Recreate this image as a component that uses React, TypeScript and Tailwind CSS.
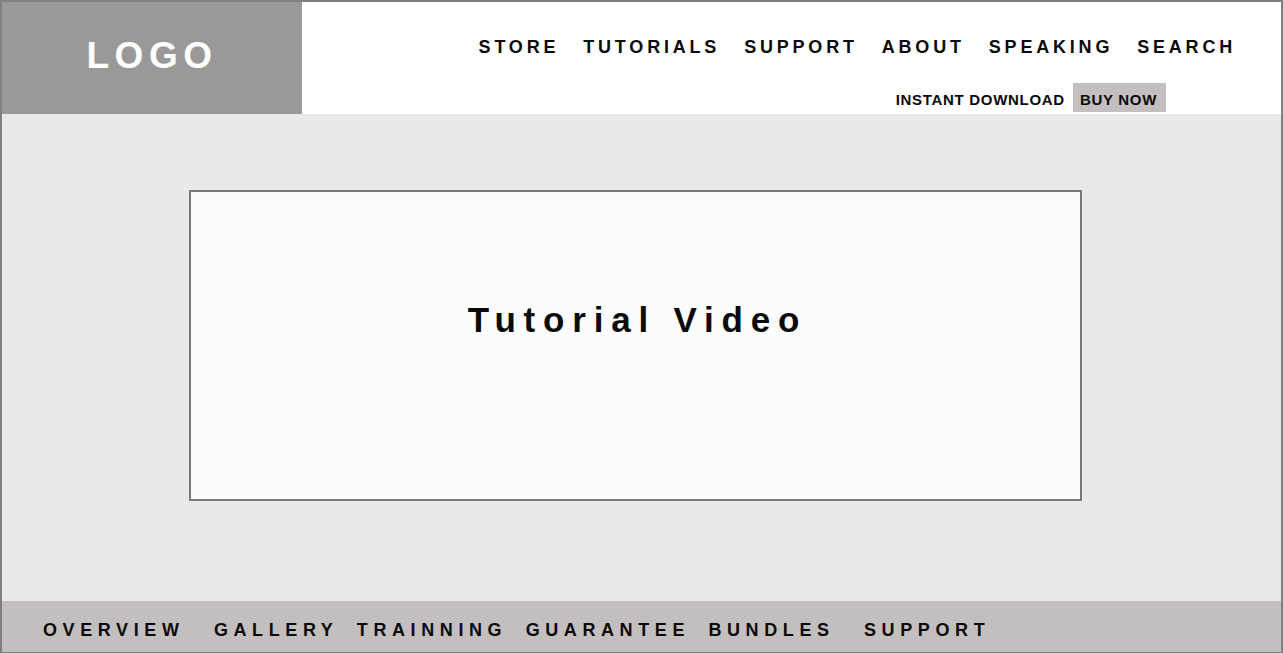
const topNav = ['STORE', 'TUTORIALS', 'SUPPORT', 'ABOUT', 'SPEAKING', 'SEARCH'];

const footerNav = [
  { label: 'OVERVIEW', extra: '' },
  { label: 'GALLERY', extra: 'ml-[11px]' },
  { label: 'TRAINNING', extra: '' },
  { label: 'GUARANTEE', extra: '' },
  { label: 'BUNDLES', extra: '' },
  { label: 'SUPPORT', extra: 'ml-[11px]' },
];

const App = () => {
  return (
    <div className="w-[1283px] h-[653px] flex flex-col border-2 border-b border-[#808080] font-['Liberation_Sans',Arial,sans-serif] text-[#0a0a0a] overflow-hidden">
      {/* Header */}
      <header className="h-[112px] flex shrink-0 bg-white">
        <div className="w-[300px] h-full bg-[#9a9898] pt-[35px] text-center">
          <span className="text-[37px] leading-none font-bold text-white tracking-[5.5px]">LOGO</span>
        </div>
        <div className="flex-1 flex flex-col">
          <nav className="flex justify-end gap-6 pt-[36px] pr-[45px]">
            {topNav.map((item) => (
              <a key={item} className="text-[18px] leading-none font-bold tracking-[3.8px]">
                {item}
              </a>
            ))}
          </nav>
          <div className="flex justify-end items-start gap-2 pr-[115px] mt-[27px]">
            <span className="text-[15px] leading-none font-bold tracking-[0.7px] pt-[9px]">INSTANT DOWNLOAD</span>
            <button className="h-[29px] bg-[#c4bfbf] pl-[7px] pr-[9px] pt-[9px] text-[15px] leading-none font-bold tracking-[0.7px] flex items-start">
              BUY NOW
            </button>
          </div>
        </div>
      </header>

      {/* Main */}
      <main className="flex-1 bg-[#eae8e9] pt-[76px] pl-[187px]">
        <div className="w-[893px] h-[311px] border-2 border-[#7a7a7a] bg-[#fcfcfc] pt-[110px] pl-[4px] text-center">
          <span className="text-[35px] leading-none font-bold tracking-[7.8px]">Tutorial Video</span>
        </div>
      </main>

      {/* Footer */}
      <footer className="h-[51px] shrink-0 bg-[#c4bfbf] flex items-start gap-[18.4px] pt-[20px] pl-[41px]">
        {footerNav.map((item) => (
          <a key={item.label} className={`text-[18px] leading-none font-bold tracking-[5.6px] ${item.extra}`}>
            {item.label}
          </a>
        ))}
      </footer>
    </div>
  );
};

export default App;
